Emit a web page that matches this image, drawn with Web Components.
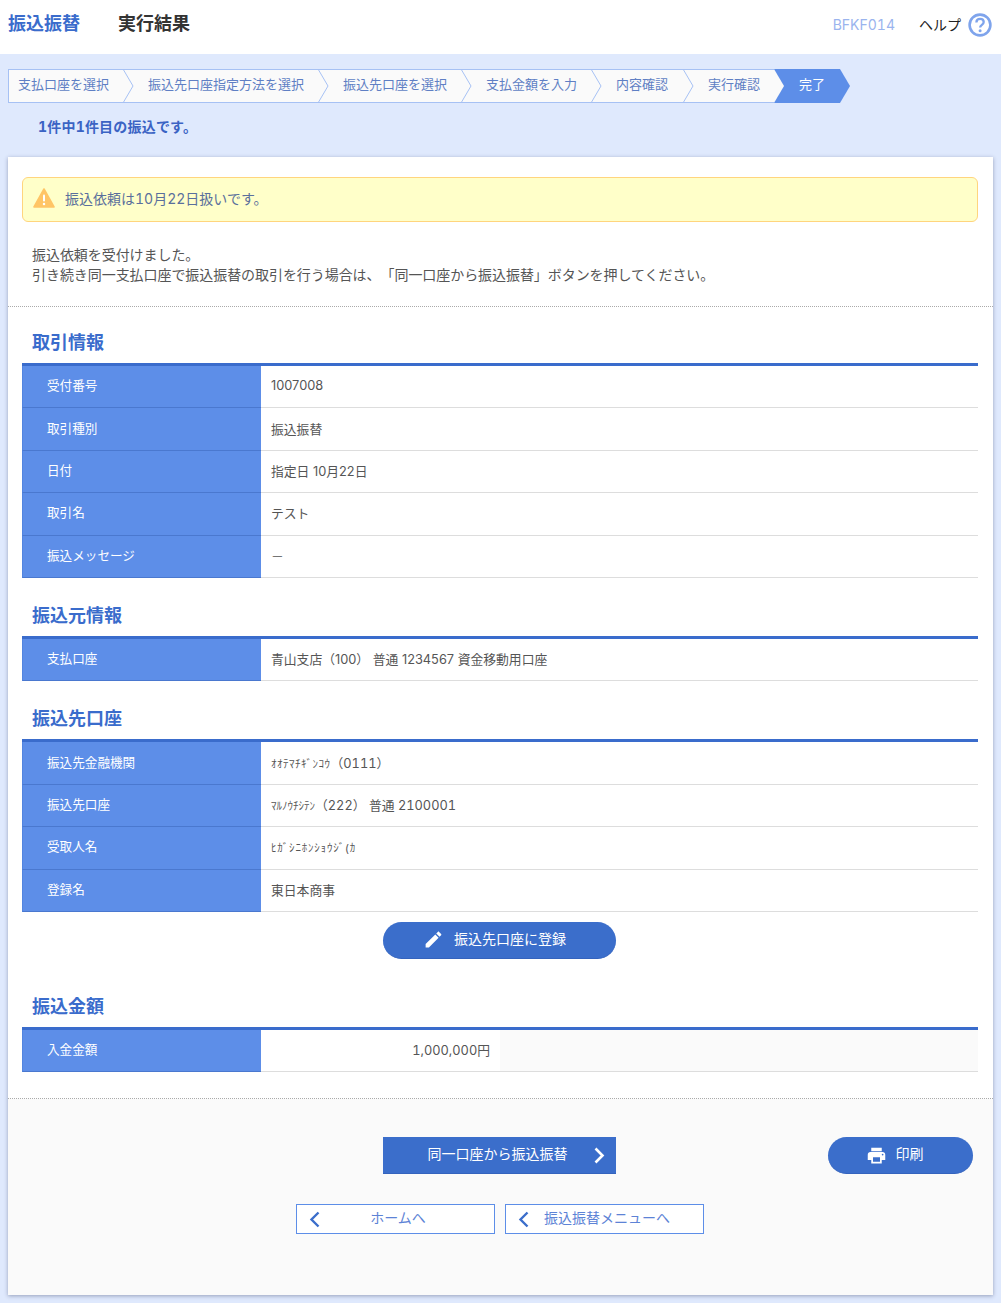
<!DOCTYPE html>
<html lang="ja">
<head>
<meta charset="utf-8">
<title>振込振替 実行結果</title>
<style>
  html, body { margin: 0; padding: 0; background: #dfe9fd; }
  body { font-family: Inter, "Noto Sans CJK JP", sans-serif; font-variant-numeric: tabular-nums; color: #444; text-spacing-trim: space-all; }
  .after { display: flex; justify-content: center; padding: 10px 2px 0 0; }
</style>
</head>
<body>

<page-main>
  <page-header slot="header"></page-header>
  <step-bar slot="bar">
    <step-item first>支払口座を選択</step-item>
    <step-item>振込先口座指定方法を選択</step-item>
    <step-item>振込先口座を選択</step-item>
    <step-item>支払金額を入力</step-item>
    <step-item style="padding-right: 15px">内容確認</step-item>
    <step-item>実行確認</step-item>
    <step-item active style="padding-right: 15px">完了</step-item>
  </step-bar>
  <span slot="note">1件中1件目の振込です。</span>

  <result-card>
    <alert-box slot="alert">振込依頼は10月22日扱いです。</alert-box>
    <span slot="message">振込依頼を受付けました。<br>引き続き同一支払口座で振込振替の取引を行う場合は、「同一口座から振込振替」ボタンを押してください。</span>

    <info-section heading="取引情報" first>
      <info-row label="受付番号">1007008</info-row>
      <info-row label="取引種別">振込振替</info-row>
      <info-row label="日付">指定日 10月22日</info-row>
      <info-row label="取引名">テスト</info-row>
      <info-row label="振込メッセージ">－</info-row>
    </info-section>

    <info-section heading="振込元情報">
      <info-row label="支払口座">青山支店（100） 普通 1234567 資金移動用口座</info-row>
    </info-section>

    <info-section heading="振込先口座">
      <info-row label="振込先金融機関" tabular><small-kana style="letter-spacing: .5px">ｵｵﾃﾏﾁｷﾞﾝｺｳ</small-kana>（0111）</info-row>
      <info-row label="振込先口座" tabular><small-kana>ﾏﾙﾉｳﾁｼﾃﾝ</small-kana>（222） 普通 2100001</info-row>
      <info-row label="受取人名"><small-kana style="letter-spacing: .8px">ﾋｶﾞｼﾆﾎﾝｼｮｳｼﾞ(ｶ</small-kana></info-row>
      <info-row label="登録名">東日本商事</info-row>
      <div slot="after" class="after">
        <pill-button icon="edit" wide>振込先口座に登録</pill-button>
      </div>
    </info-section>

    <info-section heading="振込金額" spaced>
      <info-row label="入金金額" amount tabular>1,000,000円</info-row>
    </info-section>

    <card-footer slot="footer">
      <next-button slot="main">同一口座から振込振替</next-button>
      <pill-button slot="side" icon="print">印刷</pill-button>
      <back-button slot="back">ホームへ</back-button>
      <back-button slot="back">振込振替メニューへ</back-button>
    </card-footer>
  </result-card>
</page-main>

<script>
class PageHeader extends HTMLElement {
  constructor() {
    super();
    this.attachShadow({ mode: 'open' }).innerHTML = `
      <style>
        :host { display: flex; align-items: center; height: 54px; background: #fff; padding: 0 9px 0 8px; box-sizing: border-box; }
        h1 { margin: 0; font-size: 18px; font-weight: 700; line-height: 26px; position: relative; top: -3px; }
        .menu { color: #3a6ccc; margin-right: 38px; }
        .page { color: #333; }
        .code { margin-left: auto; font-size: 14px; color: #9ab4ee; margin-right: 24px; position: relative; top: -3px; }
        .help { font-size: 14px; color: #222; margin-right: 7px; position: relative; top: -3px; }
        svg { display: block; width: 24px; height: 24px; position: relative; top: -2px; }
      </style>
      <h1 class="menu">振込振替</h1>
      <h1 class="page">実行結果</h1>
      <span class="code">BFKF014</span>
      <span class="help">ヘルプ</span>
      <svg viewBox="0 0 24 24" fill="none" stroke="#7fa4ec">
        <circle cx="12" cy="12" r="10.4" stroke-width="2.6"/>
        <path d="M8.4 9.4c0-2.2 1.6-3.5 3.7-3.5s3.6 1.2 3.6 3.1c0 2.9-3.6 2.8-3.6 5.6" stroke-width="2.3"/>
        <circle cx="12.1" cy="17.7" r="1.5" fill="#7fa4ec" stroke="none"/>
      </svg>`;
  }
}

class PageMain extends HTMLElement {
  constructor() {
    super();
    this.attachShadow({ mode: 'open' }).innerHTML = `
      <style>
        :host { display: block; background: #dfe9fd; }
        .inner { padding: 15px 8px 8px; }
        .note { height: 40px; margin-top: 14px; padding-left: 30px; box-sizing: border-box; font-size: 14px; line-height: 20px; font-weight: 700; letter-spacing: .2px; color: #3a63c4; }
      </style>
      <slot name="header"></slot>
      <div class="inner">
        <slot name="bar"></slot>
        <div class="note"><slot name="note"></slot></div>
        <slot></slot>
      </div>`;
  }
}

class StepBar extends HTMLElement {
  constructor() {
    super();
    this.attachShadow({ mode: 'open' }).innerHTML = `
      <style>
        :host { display: flex; height: 34px; }
      </style>
      <slot></slot>`;
  }
}

class StepItem extends HTMLElement {
  constructor() {
    super();
    const active = this.hasAttribute('active');
    const first = this.hasAttribute('first');
    const notch = active
      ? '<svg class="lead" viewBox="0 0 10 34"><polygon points="0,0 10,17 0,34" fill="#fafafa"/></svg>'
      : '<svg class="lead" viewBox="0 0 11 34"><polyline points="0,0 10,17 0,34" fill="none" stroke="#a6c1f4" stroke-width="1"/></svg>';
    this.attachShadow({ mode: 'open' }).innerHTML = `
      <style>
        :host { display: block; position: relative; box-sizing: border-box; height: 34px; line-height: 29px; font-size: 13px; white-space: nowrap;
          padding: 0 14px 0 25px; background: #fafafa; color: #5f7fc4; border-top: 1px solid #a6c1f4; border-bottom: 1px solid #a6c1f4; }
        :host([first]) { padding-left: 9px; border-left: 1px solid #a6c1f4; }
        :host([active]) { background: #5d8ee8; color: #fff; border-color: #5d8ee8; }
        svg { position: absolute; top: -1px; height: 34px; display: block; }
        .lead { left: 0; width: 11px; }
        :host([active]) .lead { width: 10px; }
        .tip { left: 100%; width: 10px; }
      </style>
      ${first ? '' : notch}
      <slot></slot>
      ${active ? '<svg class="tip" viewBox="0 0 10 34"><polygon points="0,0 10,17 0,34" fill="#5d8ee8"/></svg>' : ''}`;
  }
}

class ResultCard extends HTMLElement {
  constructor() {
    super();
    this.attachShadow({ mode: 'open' }).innerHTML = `
      <style>
        :host { display: block; background: #fff; box-shadow: 0 1px 4px rgba(40, 50, 90, .4); padding-top: 20px; }
        .top { padding: 0 14px; }
        .message { display: block; margin: 23px 0 21px; padding-left: 10px; font-size: 14px; line-height: 20px; letter-spacing: -.06px; color: #555; white-space: nowrap; }
        hr { margin: 0; border: 0; border-top: 1px dotted #aaa; }
        .body { padding: 0 15px 26px 14px; }
      </style>
      <div class="top">
        <slot name="alert"></slot>
        <div class="message"><slot name="message"></slot></div>
      </div>
      <hr>
      <div class="body"><slot></slot></div>
      <hr>
      <slot name="footer"></slot>`;
  }
}

class AlertBox extends HTMLElement {
  constructor() {
    super();
    this.attachShadow({ mode: 'open' }).innerHTML = `
      <style>
        :host { display: flex; align-items: center; box-sizing: border-box; height: 45px; margin-right: 1px; padding-left: 10px; background: #ffffc9; border: 1px solid #ffd57e; border-radius: 6px; font-size: 14px; color: #5a6f9c; }
        svg { width: 22px; height: 20px; margin-right: 10px; display: block; flex: none; position: relative; top: -2px; }
        span { position: relative; top: -2px; }
      </style>
      <svg viewBox="0 0 22 20">
        <path d="M11 1 L21 19 H1 Z" fill="#ffc566" stroke="#ffc566" stroke-width="1.6" stroke-linejoin="round"/>
        <rect x="10" y="6.5" width="2" height="7" rx="1" fill="#fff"/>
        <circle cx="11" cy="16" r="1.25" fill="#fff"/>
      </svg>
      <span><slot></slot></span>`;
  }
}

class InfoSection extends HTMLElement {
  constructor() {
    super();
    const title = this.getAttribute('heading');
    this.attachShadow({ mode: 'open' }).innerHTML = `
      <style>
        :host { display: block; padding-top: 24px; }
        :host([first]) { padding-top: 22px; }
        :host([spaced]) { padding-top: 34px; }
        h2 { margin: 0 0 8px 10px; font-size: 18px; line-height: 24px; padding-top: 2px; font-weight: 700; color: #3a6ccc; }
        .rows { border-top: 3px solid #3a6ccc; }
      </style>
      <h2>${title}</h2>
      <div class="rows"><slot></slot></div>
      <slot name="after"></slot>`;
  }
}

class InfoRow extends HTMLElement {
  constructor() {
    super();
    const label = this.getAttribute('label');
    this.attachShadow({ mode: 'open' }).innerHTML = `
      <style>
        :host { display: grid; grid-template-columns: 239px 1fr; height: 42.4px; font-size: 12.8px; font-variant-numeric: normal; }
        :host([tabular]) { font-variant-numeric: tabular-nums; }
        :host([amount]) { grid-template-columns: 239px 239px 1fr; }
        .label { box-sizing: border-box; background: #5d8ee8; color: #fff; font-size: 12.6px; padding-left: 24px; display: flex; align-items: center; border-bottom: 1px solid #4a78cf; border-left: 1px solid #5285e0; }
        .label span { position: relative; top: -2px; }
        .value { box-sizing: border-box; display: flex; align-items: center; padding-left: 10px; border-bottom: 1px solid #ddd; color: #555; white-space: nowrap; }
        .value span { position: relative; top: -1px; }
        :host([amount]) .value { justify-content: flex-end; padding: 0 10px 0 0; }
        .rest { background: #fafafa; border-bottom: 1px solid #ddd; }
      </style>
      <div class="label"><span>${label}</span></div>
      <div class="value"><span><slot></slot></span></div>
      ${this.hasAttribute('amount') ? '<div class="rest"></div>' : ''}`;
  }
}

class SmallKana extends HTMLElement {
  constructor() {
    super();
    this.attachShadow({ mode: 'open' }).innerHTML =
      '<style>:host { display: inline; font-size: 11px; }</style><slot></slot>';
  }
}

const ICONS = {
  edit: '<path d="M3 17.25V21h3.75L17.81 9.94l-3.75-3.75L3 17.25zM20.71 7.04c.39-.39.39-1.02 0-1.41l-2.34-2.34c-.39-.39-1.02-.39-1.41 0l-1.83 1.83 3.75 3.75 1.83-1.83z"/>',
  print: '<path d="M19 8H5c-1.66 0-3 1.34-3 3v6h4v4h12v-4h4v-6c0-1.66-1.34-3-3-3zm-3 11H8v-5h8v5zm3-7c-.55 0-1-.45-1-1s.45-1 1-1 1 .45 1 1-.45 1-1 1zm-1-9H6v4h12V3z"/>'
};

class PillButton extends HTMLElement {
  constructor() {
    super();
    const icon = ICONS[this.getAttribute('icon')];
    this.attachShadow({ mode: 'open' }).innerHTML = `
      <style>
        :host { display: flex; align-items: center; justify-content: center; box-sizing: border-box; width: 145px; height: 37px; padding-right: 12px; border-radius: 19px; background: #3b6ecb; color: #fff; font-size: 14px; gap: 9px; cursor: pointer; border-bottom: 1px solid #3463bd; }
        :host([wide]) { width: 233px; gap: 10px; padding-right: 9px; }
        svg { width: 21px; height: 21px; display: block; fill: #fff; }
        span { position: relative; top: -2px; }
      </style>
      <svg viewBox="0 0 24 24">${icon}</svg>
      <span><slot></slot></span>`;
  }
}

class NextButton extends HTMLElement {
  constructor() {
    super();
    this.attachShadow({ mode: 'open' }).innerHTML = `
      <style>
        :host { display: flex; align-items: center; justify-content: center; position: relative; box-sizing: border-box; width: 233px; height: 37px; padding-right: 4px; background: #3b6ecb; color: #fff; font-size: 14px; cursor: pointer; border-bottom: 1px solid #3463bd; }
        span { position: relative; top: -2px; }
        svg { position: absolute; right: 11px; top: 10px; width: 12px; height: 17px; fill: none; stroke: #fff; stroke-width: 2.6; }
      </style>
      <span><slot></slot></span>
      <svg viewBox="0 0 12 17"><polyline points="2.5,1.5 9.5,8.5 2.5,15.5"/></svg>`;
  }
}

class BackButton extends HTMLElement {
  constructor() {
    super();
    this.attachShadow({ mode: 'open' }).innerHTML = `
      <style>
        :host { display: flex; align-items: center; justify-content: center; position: relative; box-sizing: border-box; width: 199px; height: 30px; padding-left: 5px; background: #fff; border: 1px solid #5d8ee8; color: #5d83d6; font-size: 14px; cursor: pointer; }
        span { position: relative; top: -2px; }
        svg { position: absolute; left: 12px; top: 6px; width: 12px; height: 17px; fill: none; stroke: #3b6ecb; stroke-width: 2.4; }
      </style>
      <svg viewBox="0 0 12 17"><polyline points="9.5,1.5 2.5,8.5 9.5,15.5"/></svg>
      <span><slot></slot></span>`;
  }
}

class CardFooter extends HTMLElement {
  constructor() {
    super();
    this.attachShadow({ mode: 'open' }).innerHTML = `
      <style>
        :host { display: block; background: #fafafa; padding: 38px 20px 61px 0; }
        .actions { display: grid; grid-template-columns: 375px 233px 1fr; }
        .actions ::slotted([slot="main"]) { grid-column: 2; }
        .actions ::slotted([slot="side"]) { grid-column: 3; justify-self: end; }
        .back { display: flex; gap: 10px; margin: 30px 0 0 288px; }
      </style>
      <div class="actions">
        <slot name="main"></slot>
        <slot name="side"></slot>
      </div>
      <div class="back"><slot name="back"></slot></div>`;
  }
}

customElements.define('page-header', PageHeader);
customElements.define('step-bar', StepBar);
customElements.define('step-item', StepItem);
customElements.define('alert-box', AlertBox);
customElements.define('info-row', InfoRow);
customElements.define('small-kana', SmallKana);
customElements.define('info-section', InfoSection);
customElements.define('pill-button', PillButton);
customElements.define('next-button', NextButton);
customElements.define('back-button', BackButton);
customElements.define('card-footer', CardFooter);
customElements.define('result-card', ResultCard);
customElements.define('page-main', PageMain);
</script>
</body>
</html>
